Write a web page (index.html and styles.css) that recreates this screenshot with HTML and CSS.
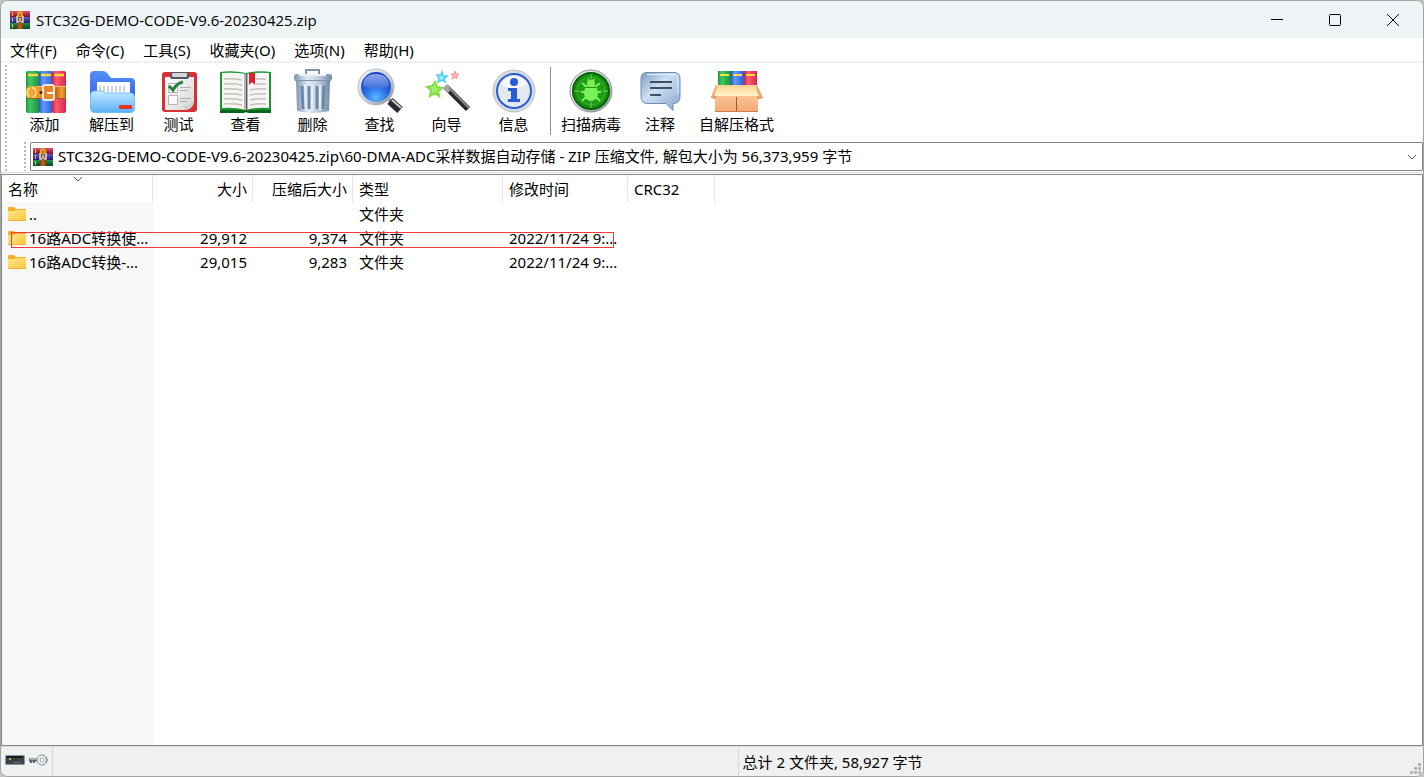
FILE: index.html
```html
<!DOCTYPE html>
<html lang="zh-CN">
<head>
  <meta charset="UTF-8">
  <meta name="viewport" content="width=device-width, initial-scale=1.0">
  <title>STC32G-DEMO-CODE-V9.6-20230425.zip</title>
  <link rel="stylesheet" href="styles.css">
</head>
<body>
  <!-- Shared gradients and symbols -->
  <svg class="defs" aria-hidden="true">
    <defs>
      <linearGradient id="green"><stop offset="0" stop-color="#1d9a3e"/><stop offset=".3" stop-color="#3fc765"/><stop offset="1" stop-color="#178f38"/></linearGradient>
      <linearGradient id="blue"><stop offset="0" stop-color="#2a55cf"/><stop offset=".3" stop-color="#639aff"/><stop offset="1" stop-color="#2c5cd8"/></linearGradient>
      <linearGradient id="red"><stop offset="0" stop-color="#d01c3a"/><stop offset=".3" stop-color="#ff5b76"/><stop offset="1" stop-color="#d8284a"/></linearGradient>
      <linearGradient id="belt"><stop offset="0" stop-color="#f9b23a"/><stop offset=".25" stop-color="#f39a2c"/><stop offset=".5" stop-color="#d9811f"/><stop offset=".75" stop-color="#c9690f"/><stop offset=".9" stop-color="#f3a03a"/><stop offset="1" stop-color="#b86014"/></linearGradient>
      <linearGradient id="folderBack" x2="0" y2="1"><stop offset="0" stop-color="#5590fa"/><stop offset="1" stop-color="#2a5ce8"/></linearGradient>
      <linearGradient id="folderFront" x2="0" y2="1"><stop offset="0" stop-color="#c4eaff"/><stop offset="1" stop-color="#5cb0f7"/></linearGradient>
      <linearGradient id="paper" x2="1" y2="1"><stop offset="0" stop-color="#fff"/><stop offset="1" stop-color="#d5d5d5"/></linearGradient>
      <linearGradient id="steel"><stop offset="0" stop-color="#7d94b1"/><stop offset=".35" stop-color="#e4edf6"/><stop offset=".7" stop-color="#b9c8da"/><stop offset="1" stop-color="#6f86a4"/></linearGradient>
      <linearGradient id="silver" x2="1" y2="1"><stop offset="0" stop-color="#f4f7fa"/><stop offset=".6" stop-color="#c3cbd4"/><stop offset="1" stop-color="#7d8791"/></linearGradient>
      <radialGradient id="lens" cy=".85" r=".8"><stop offset="0" stop-color="#58b8ff"/><stop offset=".5" stop-color="#2869e4"/><stop offset="1" stop-color="#1a41bd"/></radialGradient>
      <linearGradient id="gloss" x2="0" y2="1"><stop offset="0" stop-color="#a9bcf4"/><stop offset="1" stop-color="#4670dd"/></linearGradient>
      <linearGradient id="bubble" x2="1" y2="1"><stop offset="0" stop-color="#7f9cc4"/><stop offset=".4" stop-color="#cddff3"/><stop offset="1" stop-color="#8aa7cd"/></linearGradient>
      <radialGradient id="radar"><stop offset="0" stop-color="#2fb41c"/><stop offset="1" stop-color="#168a10"/></radialGradient>
      <linearGradient id="carton" x2="0" y2="1"><stop offset="0" stop-color="#ffc795"/><stop offset="1" stop-color="#f3a878"/></linearGradient>
      <linearGradient id="flap" x2="0" y2="1"><stop offset="0" stop-color="#f8d092"/><stop offset="1" stop-color="#fff4cb"/></linearGradient>
      <linearGradient id="dirFront" x2="1" y2="1"><stop offset="0" stop-color="#ffe58c"/><stop offset="1" stop-color="#ffc73c"/></linearGradient>
      <linearGradient id="stackRed" x2="0" y2="1"><stop offset="0" stop-color="#e0506e"/><stop offset="1" stop-color="#7c1030"/></linearGradient>
      <linearGradient id="stackBlue" x2="0" y2="1"><stop offset="0" stop-color="#5a56d0"/><stop offset="1" stop-color="#1e1b77"/></linearGradient>
      <linearGradient id="stackGreen" x2="0" y2="1"><stop offset="0" stop-color="#25934f"/><stop offset="1" stop-color="#05451f"/></linearGradient>
    </defs>
    <symbol id="archive" viewBox="0 0 20 20">
      <path fill="url(#stackRed)" d="M0 1h20v6H0z"/>
      <path fill="url(#stackBlue)" d="M0 7h20v6H0z"/>
      <path fill="url(#stackGreen)" d="M0 13h20v6H0z"/>
      <path stroke="#f3c13c" d="M2.500 2v4M2.500 8v4M2.500 14v4"/>
      <path fill="#e39a22" d="M7 3q0-2 3-2t3 2v5H7z"/>
      <path fill="#8e3f0b" d="M7 11h6v8H7z"/>
      <path stroke="#b9601a" stroke-width="3" d="M10 13v6"/>
      <path fill="#8a5a2b" d="M7 7h6v5H7z"/>
      <path fill="none" stroke="#ddd" stroke-width="1.500" d="M7 6v6h2M13 6v6h-2"/>
      <path stroke="#fff" d="M10 8v4"/>
      <path stroke="#8a4a10" d="M10 4v2"/>
    </symbol>
    <symbol id="folder" viewBox="0 0 18 16">
      <path fill="#f5b021" d="M0 2q0-1 1-1h5l2 2h9q1 0 1 1v4H0z"/>
      <path fill="url(#dirFront)" d="M0 5h6l2-1h10v10q0 1-1 1H1q-1 0-1-1z"/>
      <path stroke="#eeb23b" d="M0 14.500h18"/>
    </symbol>
  </svg>

  <div class="window">
    <header class="titlebar">
      <svg class="app-icon"><use href="#archive"/></svg>
      <h1>STC32G-DEMO-CODE-V9.6-20230425.zip</h1>
      <div class="window-buttons">
        <button type="button" aria-label="最小化"><svg viewBox="0 0 14 14"><path d="M1 6.500h12"/></svg></button>
        <button type="button" aria-label="最大化"><svg viewBox="0 0 14 14"><rect x="1.500" y="1.500" width="11" height="11" rx="1"/></svg></button>
        <button type="button" aria-label="关闭"><svg viewBox="0 0 14 14"><path d="M1 1l12 12M13 1L1 13"/></svg></button>
      </div>
    </header>

    <nav class="menubar">
      <button type="button">文件(F)</button>
      <button type="button">命令(C)</button>
      <button type="button">工具(S)</button>
      <button type="button">收藏夹(O)</button>
      <button type="button">选项(N)</button>
      <button type="button">帮助(H)</button>
    </nav>

    <div class="rebar">
      <span class="grip"></span>
      <div class="bands">
        <div class="toolbar">
          <div class="tools">
            <button type="button">
              <svg viewBox="0 0 54 48">
                <rect x="8" y="4" width="14" height="42" rx="2" fill="url(#green)"/>
                <rect x="21" y="4" width="14" height="42" rx="2" fill="url(#blue)"/>
                <rect x="34" y="4" width="14" height="42" rx="2" fill="url(#red)"/>
                <path stroke="#ffd83c" stroke-width="2.500" d="M10 8h10M23 8h10M36 8h10"/>
                <path fill="url(#belt)" d="M13 19h35v13H13q-5 0-5-6.500T13 19z"/>
                <path fill="none" stroke="#ffe08a" stroke-width="1.500" d="M11 21q-3 4 0 9M14 20.500q4 1 4 5t-4 5.500"/>
                <path stroke="#ffc46a" d="M19 19.500h29"/>
                <path stroke="#a85c16" d="M10 31.500h38"/>
                <rect x="25" y="18" width="11" height="15" rx="2" fill="#e0882a" stroke="#eee7df" stroke-width="2"/>
                <path stroke="#f8f4ee" stroke-width="2" d="M29 26h7"/>
                <circle cx="23" cy="25.500" r="1.500" fill="#4c2408"/>
              </svg>
              添加
            </button>
            <button type="button">
              <svg viewBox="0 0 54 48">
                <path fill="url(#folderBack)" d="M5 8q0-4 4-4h9q3 0 5 3l3 4h20q4 0 4 4v22H5z"/>
                <path fill="#fff" d="M12 15h33v14H12z"/>
                <path fill="url(#folderFront)" stroke="#73bff8" d="M5.500 28q0-4 4-4h8l3 2h25q4 0 4 4v11q0 4.500-4.500 4.500h-35q-4.500 0-4.500-4.500z"/>
                <path stroke="#b9c4ce" stroke-width="1.500" d="M15 19v5M19 19v5M23 19v6M27 19v6M31 19v6M35 19v6M39 19v6"/>
                <rect x="34" y="38" width="13" height="4" rx="1" fill="#e83222"/>
              </svg>
              解压到
            </button>
            <button type="button">
              <svg viewBox="0 0 54 48">
                <rect x="10" y="5" width="35" height="40" rx="3" fill="#d93036"/>
                <path fill="url(#paper)" d="M13 10h29v25q-1 7-9 8H13z"/>
                <path fill="#d1d1d1" d="M42 34q-4 5-11 4 2 3 0 5 9 0 11-9z"/>
                <rect x="18" y="5" width="19" height="7" rx="2" fill="#51575d"/>
                <rect x="20" y="6" width="15" height="4" rx="1" fill="#d3d6d8"/>
                <path fill="#fafafa" stroke="#b4b4b4" d="M16.500 16.500h9v9h-9zM16.500 28.500h9v9h-9z"/>
                <path fill="none" stroke="#207f38" stroke-width="3" d="M17 19l4 4q4-7 10-8"/>
                <path stroke="#b0b0b0" d="M28 20.500h11M28 23.500h8M28 31.500h11M28 34.500h7"/>
              </svg>
              测试
            </button>
            <button type="button">
              <svg viewBox="0 0 54 48">
                <path fill="#1d9630" d="M1 5q13-2 26 1 13-3 25-1v41H30l-3-1-3 1H1z"/>
                <path fill="#0b641b" d="M1 43h51v3H30l-3-1-3 1H1z"/>
                <path fill="#f6f5f3" d="M3 6q13-1 24 1v36q-11-3-24-2zM27 7q11-2 23-1v35q-12-1-23 2z"/>
                <path fill="#b5b5b5" d="M25 7h4v36l-2-1-2 1z"/>
                <path stroke="#555" d="M27.500 7v37"/>
                <path fill="none" stroke="#c4c0bb" stroke-width="1.500" d="M5 12q9-1 18 1M5 17q9-1 18 1M5 22q9-1 18 1M5 27q9-1 18 1M5 32q9-1 18 1M5 37q9-1 18 1M37 12h10M37 17h10M31 23q8-2 16-1M31 28q8-2 16-1M31 33q8-2 16-1M31 38q8-2 16-1"/>
                <path fill="#db2228" d="M30 6h6v12l-3-3-3 3z"/>
              </svg>
              查看
            </button>
            <button type="button">
              <svg viewBox="0 0 54 48">
                <path fill="none" stroke="#8093ab" stroke-width="2" d="M20 8V3h13v5"/>
                <path fill="url(#steel)" d="M10 13h34l-1 31q-16 4-32 0z"/>
                <path stroke="#6d87a6" stroke-width="3" d="M16 19l1 23M23 19v23M31 19v23M38 19l-1 23"/>
                <path stroke="#e5edf6" stroke-width="2" d="M19 18l1 25M26 18v25M34 18v25"/>
                <rect x="8" y="7" width="38" height="7" rx="3" fill="url(#steel)"/>
                <path stroke="#e9f1f9" stroke-width="2" d="M13 8h27"/>
                <path stroke="#7d94b0" d="M9 13.500h36"/>
              </svg>
              删除
            </button>
            <button type="button">
              <svg viewBox="0 0 54 48">
                <path stroke="#848d96" stroke-width="4" d="M33 30l7 6"/>
                <path stroke="#282b31" stroke-width="8" d="M37 34l10 9"/>
                <path stroke="#ccc" stroke-width="2" d="M39 33l9 8"/>
                <circle cx="23" cy="20" r="18" fill="url(#silver)" stroke="#b5bfc8"/>
                <circle cx="23" cy="20" r="15" fill="url(#lens)"/>
                <path fill="url(#gloss)" d="M10 19q0-12 13-12t13 12q-12 5-26 0z" opacity=".8"/>
              </svg>
              查找
            </button>
            <button type="button">
              <svg viewBox="0 0 54 48">
                <path fill="#a4ec74" stroke="#7fdd3c" stroke-width="2" d="M15 15l2 5 5 1-4 3 1 5-4-3-5 3 1-6-4-3 5-1z"/>
                <path fill="#9debff" stroke="#4fd0f2" stroke-width="1.500" d="M22 5l1 4 4 0-3 3 1 3-3-2-4 2 1-4-2-3 4 0z"/>
                <path fill="#ffb4b4" stroke="#f99a9a" d="M35 4l1 3 3 0-2 2 0 3-2-2-3 2 1-3-2-2 3 0z"/>
                <path stroke="#292929" stroke-width="6" d="M26 20l22 22"/>
                <path stroke="#a5a5a5" stroke-width="6" d="M25 19l5 5"/>
                <path stroke="#898989" stroke-width="2" d="M29 21l20 20"/>
              </svg>
              向导
            </button>
            <button type="button">
              <svg viewBox="0 0 54 48">
                <circle cx="27" cy="24" r="21" fill="#d5dbe1" stroke="#bac2ca"/>
                <circle cx="27" cy="24" r="17" fill="#e4e9ee" stroke="#2d5bd0" stroke-width="2"/>
                <path fill="#fff" d="M13 17q5-8 14-8t14 8L27 24z" opacity=".6"/>
                <circle cx="27" cy="15" r="4" fill="#285bd8"/>
                <path fill="#285bd8" d="M21 21h9v11h3v3H21v-3h3v-8h-3z"/>
              </svg>
              信息
            </button>
          </div>
          <div class="tools tools-extra">
            <button type="button">
              <svg viewBox="0 0 54 48">
                <circle cx="27" cy="24" r="21" fill="url(#silver)" stroke="#8d9a8d"/>
                <circle cx="27" cy="24" r="18" fill="url(#radar)" stroke="#08630a" stroke-width="2"/>
                <circle cx="27" cy="24" r="14" fill="none" stroke="#35b82a"/>
                <path stroke="#62d952" d="M27 7v6M27 35v6M10 24h6M38 24h6"/>
                <path fill="none" stroke="#7af05b" stroke-width="2" d="M18 16l5 4M36 16l-5 4M17 25h20M18 34l5-5M36 34l-5-5M24 12l1 3M30 12l-1 3"/>
                <ellipse cx="27" cy="26" rx="7" ry="8" fill="#7af05b"/>
                <circle cx="27" cy="17" r="4" fill="#7af05b"/>
                <path stroke="#198f13" d="M22 20.500h10"/>
              </svg>
              扫描病毒
            </button>
            <button type="button">
              <svg viewBox="0 0 54 48">
                <path fill="url(#bubble)" stroke="#6d8cb8" d="M14 5.500h27q6 0 6 6v18q0 7-7 7v7l-7-7H15q-7 0-7-7v-18q0-6 6-6z"/>
                <path fill="none" stroke="#e4effa" d="M14 7.500h26q5 0 5 5v15"/>
                <path stroke="#405064" stroke-width="2" d="M17 15h22M17 21h22M17 28h11"/>
              </svg>
              注释
            </button>
            <button type="button">
              <svg viewBox="0 0 54 48">
                <path fill="url(#green)" d="M8 4h13v16H8z"/>
                <path fill="url(#blue)" d="M21 4h13v16H21z"/>
                <path fill="url(#red)" d="M34 4h13v16H34z"/>
                <path stroke="#ffdc3c" stroke-width="2" d="M10 8h9M23 8h9M36 8h9"/>
                <path fill="url(#carton)" d="M5 27h43v18H5z"/>
                <path fill="#d98450" d="M6 18L1 31l4 1 4-12zM47 18l6 13-5 1-3-12z"/>
                <path fill="url(#flap)" d="M6 18h41l4 11H2z"/>
                <path fill="#ebb177" d="M1 30l5-12 1 2-3 11zM52 30l-5-12-1 2 3 11z"/>
                <path stroke="#a6562e" d="M26.500 30v15"/>
                <path stroke="#d17d4c" d="M5 44.500h43"/>
              </svg>
              自解压格式
            </button>
          </div>
        </div>

        <div class="address-row">
          <span class="grip"></span>
          <div class="address">
            <svg class="app-icon"><use href="#archive"/></svg>
            <select aria-label="地址">
              <option>STC32G-DEMO-CODE-V9.6-20230425.zip\60-DMA-ADC采样数据自动存储 - ZIP 压缩文件, 解包大小为 56,373,959 字节</option>
            </select>
            <svg class="chevron" viewBox="0 0 10 6"><path d="M1 1l4 4 4-4"/></svg>
          </div>
        </div>
      </div>
    </div>

    <main class="file-list">
      <table>
        <colgroup>
          <col class="col-name"><col class="col-size"><col class="col-packed"><col class="col-type"><col class="col-date"><col class="col-crc"><col>
        </colgroup>
        <thead>
          <tr>
            <th>名称<svg class="sort-mark" viewBox="0 0 10 6"><path d="M1 1l4 4 4-4"/></svg></th>
            <th class="num">大小</th>
            <th class="num">压缩后大小</th>
            <th>类型</th>
            <th>修改时间</th>
            <th>CRC32</th>
            <th></th>
          </tr>
        </thead>
        <tbody>
          <tr>
            <td><div class="file-name"><svg><use href="#folder"/></svg>..</div></td>
            <td></td><td></td>
            <td>文件夹</td>
            <td></td><td></td><td></td>
          </tr>
          <tr>
            <td><div class="file-name"><svg><use href="#folder"/></svg>16路ADC转换使...</div></td>
            <td class="num">29,912</td>
            <td class="num">9,374</td>
            <td>文件夹</td>
            <td>2022/11/24 9:...</td>
            <td></td><td></td>
          </tr>
          <tr>
            <td><div class="file-name"><svg><use href="#folder"/></svg>16路ADC转换-...</div></td>
            <td class="num">29,015</td>
            <td class="num">9,283</td>
            <td>文件夹</td>
            <td>2022/11/24 9:...</td>
            <td></td><td></td>
          </tr>
        </tbody>
      </table>
      <div class="highlight"></div>
    </main>

    <footer class="statusbar">
      <div class="status-icons">
        <svg viewBox="0 0 20 12"><rect x=".5" y="1.500" width="19" height="9" rx="1" fill="#394347" stroke="#8b999f"/><path stroke="#151b1e" stroke-width="2" d="M2 3h16"/><path stroke="#9fc53d" stroke-width="2" d="M4 5h2"/><path stroke="#68757a" d="M8 8.500h9"/></svg>
        <svg viewBox="0 0 20 12"><path stroke="#59656b" stroke-width="3" d="M1 6h10"/><path stroke="#a3adb2" d="M2 5.500h8"/><path stroke="#59656b" stroke-width="2" d="M3 7v2M6 7v2"/><circle cx="14" cy="6" r="5" fill="#e9eef1" stroke="#89969c"/><circle cx="14" cy="6" r="2" fill="#fff" stroke="#9aa6ab"/><path fill="none" stroke="#707c82" d="M18 3q2 3 0 6"/></svg>
      </div>
      <div class="status-pane"></div>
      <div class="status-pane">总计 2 文件夹, 58,927 字节</div>
      <svg class="size-grip" viewBox="0 0 12 12"><path fill="#b5b5b5" d="M8 0h3v3H8zM4 4h3v3H4zM8 4h3v3H8zM0 8h3v3H0zM4 8h3v3H4zM8 8h3v3H8z"/></svg>
    </footer>
  </div>
</body>
</html>
```

FILE: styles.css
```css
* {
  box-sizing: border-box;
}

body {
  margin: 0;
  background-color: #c4c4c4;
  color: #000;
  font-family: "Noto Sans", "Noto Sans CJK SC", sans-serif;
  font-size: 15px;
  line-height: 20px;
}

button,
select {
  border: none;
  background: none;
  color: inherit;
  font: inherit;
  padding: 0;
}

svg {
  display: block;
  flex: none;
}

.defs {
  position: absolute;
  width: 0;
  height: 0;
}

.window {
  display: flex;
  flex-direction: column;
  height: 100vh;
  overflow: hidden;
  background-color: #fff;
  border: 1px solid #a3a3a3;
  border-radius: 8px;
}

/* Title bar */
.titlebar {
  display: flex;
  align-items: center;
  height: 37px;
  padding: 0 1px 0 9px;
  background-color: #eef3f6;
}

.titlebar h1 {
  flex: 1;
  margin: 0 0 0 6px;
  font-family: "Open Sans", "Noto Sans CJK SC", sans-serif;
  font-size: 15px;
  font-weight: normal;
}

.app-icon {
  width: 20px;
  height: 20px;
}

.window-buttons {
  display: flex;
  height: 100%;
}

.window-buttons button {
  display: flex;
  align-items: center;
  justify-content: center;
  width: 58px;
}

.window-buttons svg {
  width: 14px;
  height: 14px;
  fill: none;
  stroke: #000;
}

/* Menu */
.menubar {
  display: flex;
  gap: 1px;
  height: 25px;
  border-bottom: 2px solid #f0f0f0;
}

.menubar button {
  padding: 0 9px;
}

/* Toolbars */
.rebar {
  display: flex;
  padding: 2px 0 1px 4px;
  border-bottom: 1px solid #dcdcdc;
}

.grip {
  flex: none;
  width: 2px;
  background: repeating-linear-gradient(#b8b8b8 0 2px, #fff 2px 4px);
}

.bands {
  flex: 1;
  min-width: 0;
}

.toolbar {
  display: flex;
  padding: 2px 0 7px 4px;
}

.tools {
  display: flex;
}

.tools button {
  display: flex;
  flex-direction: column;
  align-items: center;
  width: 67px;
  padding: 0 0 2px;
  line-height: 18px;
  white-space: nowrap;
}

.tools button svg {
  width: 54px;
  height: 48px;
}

.tools-extra {
  margin-left: 3px;
  border-left: 1px solid #8c8c8c;
}

.tools-extra button {
  width: auto;
  min-width: 58px;
  padding: 0 10px 2px;
}

.tools-extra button:nth-child(2) {
  padding: 0 2px 2px;
}

.address-row {
  display: flex;
  padding-left: 17px;
}

.address {
  display: flex;
  flex: 1;
  align-items: center;
  height: 29px;
  margin-left: 4px;
  padding: 0 5px 0 2px;
  border: 1px solid #838387;
  border-radius: 1px;
}

.address select {
  flex: 1;
  min-width: 0;
  height: 100%;
  padding: 0 0 2px 5px;
  appearance: none;
}

.chevron,
.sort-mark {
  width: 10px;
  height: 6px;
  fill: none;
  stroke: #555;
}

/* File list, the sorted column is shaded down to the bottom */
.file-list {
  position: relative;
  flex: 1;
  margin-top: 1px;
  border: 1px solid #828790;
  background: linear-gradient(to right, #f7f7f7 151px, #fff 151px);
}

table {
  width: 100%;
  table-layout: fixed;
  border-collapse: collapse;
}

.col-name {
  width: 151px;
}

.col-size,
.col-packed {
  width: 100px;
}

.col-type {
  width: 150px;
}

.col-date {
  width: 125px;
}

.col-crc {
  width: 87px;
}

th,
td {
  padding: 0 0 0 6px;
  font-weight: normal;
  text-align: left;
  white-space: nowrap;
}

th {
  position: relative;
  height: 27px;
  background-color: #fff;
  box-shadow: inset -1px 0 #e5e5e5;
}

th:last-child {
  box-shadow: none;
}

td {
  height: 24px;
}

.num {
  padding: 0 6px 0 0;
  text-align: right;
}

.sort-mark {
  position: absolute;
  top: 1px;
  left: 71px;
}

.file-name {
  display: flex;
  align-items: center;
  gap: 3px;
}

.file-name svg {
  width: 18px;
  height: 16px;
}

.highlight {
  position: absolute;
  top: 57px;
  left: 9px;
  width: 603px;
  height: 16px;
  border: 1px solid #f03a3a;
}

/* Status bar */
.statusbar {
  position: relative;
  display: flex;
  height: 30px;
  border-top: 1px solid #dcdcdc;
  background-color: #f0f0f0;
}

.status-icons {
  display: flex;
  gap: 3px;
  width: 51px;
  padding: 7px 0 0 4px;
}

.status-icons svg {
  width: 20px;
  height: 12px;
}

.status-pane {
  flex: 1;
  padding: 5px 0 0 4px;
  border-left: 1px solid #d7d7d7;
}

.size-grip {
  position: absolute;
  right: 1px;
  bottom: 1px;
  width: 12px;
  height: 12px;
}
```
